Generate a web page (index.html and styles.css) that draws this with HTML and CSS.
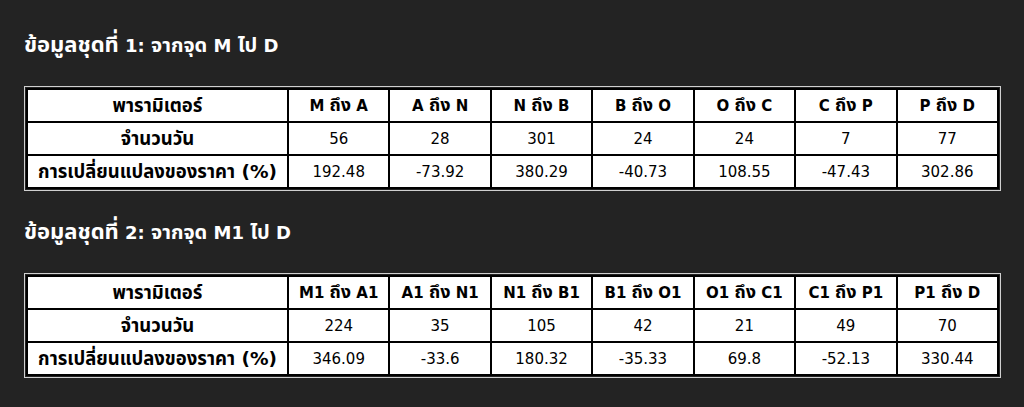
FILE: index.html
```html
<!DOCTYPE html>
<html lang="th">
<head>
<meta charset="utf-8">
<title>ข้อมูลชุด</title>
<link rel="stylesheet" href="styles.css">
</head>
<body>
<main class="page">
  <section class="dataset">
    <h2 class="title"><span class="th-lg">ข้อมูลชุดที่</span> 1: <span class="th-md">จากจุด</span> M <span class="th-md">ไป</span> D</h2>
    <table class="grid">
      <colgroup><col class="c-param"><col><col><col><col><col><col><col></colgroup>
      <tr><th class="param">พารามิเตอร์</th><th>M <span class="th">ถึง</span> A</th><th>A <span class="th">ถึง</span> N</th><th>N <span class="th">ถึง</span> B</th><th>B <span class="th">ถึง</span> O</th><th>O <span class="th">ถึง</span> C</th><th>C <span class="th">ถึง</span> P</th><th>P <span class="th">ถึง</span> D</th></tr>
      <tr><th class="param">จำนวนวัน</th><td>56</td><td>28</td><td>301</td><td>24</td><td>24</td><td>7</td><td>77</td></tr>
      <tr><th class="param">การเปลี่ยนแปลงของราคา (%)</th><td>192.48</td><td>-73.92</td><td>380.29</td><td>-40.73</td><td>108.55</td><td>-47.43</td><td>302.86</td></tr>
    </table>
  </section>
  <section class="dataset">
    <h2 class="title"><span class="th-lg">ข้อมูลชุดที่</span> 2: <span class="th-md">จากจุด</span> M1 <span class="th-md">ไป</span> D</h2>
    <table class="grid">
      <colgroup><col class="c-param"><col><col><col><col><col><col><col></colgroup>
      <tr><th class="param">พารามิเตอร์</th><th>M1 <span class="th">ถึง</span> A1</th><th>A1 <span class="th">ถึง</span> N1</th><th>N1 <span class="th">ถึง</span> B1</th><th>B1 <span class="th">ถึง</span> O1</th><th>O1 <span class="th">ถึง</span> C1</th><th>C1 <span class="th">ถึง</span> P1</th><th>P1 <span class="th">ถึง</span> D</th></tr>
      <tr><th class="param">จำนวนวัน</th><td>224</td><td>35</td><td>105</td><td>42</td><td>21</td><td>49</td><td>70</td></tr>
      <tr><th class="param">การเปลี่ยนแปลงของราคา (%)</th><td>346.09</td><td>-33.6</td><td>180.32</td><td>-35.33</td><td>69.8</td><td>-52.13</td><td>330.44</td></tr>
    </table>
  </section>
</main>
</body>
</html>
```

FILE: styles.css
```css
html, body {
  margin: 0;
  padding: 0;
  background: #232323;
}

body {
  font-family: Tahoma, "DejaVu Sans", "Noto Sans Thai", "Noto Sans", sans-serif;
  color: #ffffff;
}

.page {
  padding: 31px 0 0 24px;
}

.dataset {
  display: flex;
  flex-direction: column;
  align-items: flex-start;
  margin-bottom: 29px;
}

.title {
  margin: 0 0 28px 0;
  font-size: 18px;
  line-height: 28px;
  font-weight: bold;
  color: #ffffff;
}

.th-lg {
  font-size: 22px;
}

.th-md {
  font-size: 20px;
}

.grid {
  margin-left: 2px;
  width: 973px;
  table-layout: fixed;
  border-collapse: collapse;
  background: #ffffff;
  color: #000000;
  outline: 1px solid #d0d0d0;
  outline-offset: 1px;
  font-size: 15px;
}

.grid tr {
  height: 33px;
}

.c-param {
  width: 261px;
}

.grid th,
.grid td {
  border: 2px solid #000000;
  padding: 0 4px;
  line-height: 16px;
  text-align: center;
  vertical-align: middle;
  white-space: nowrap;
}

.grid th {
  font-weight: bold;
}

.grid th.param {
  font-size: 18.5px;
}

.grid .th {
  font-size: 18px;
}

.grid td {
  font-weight: normal;
}
```
